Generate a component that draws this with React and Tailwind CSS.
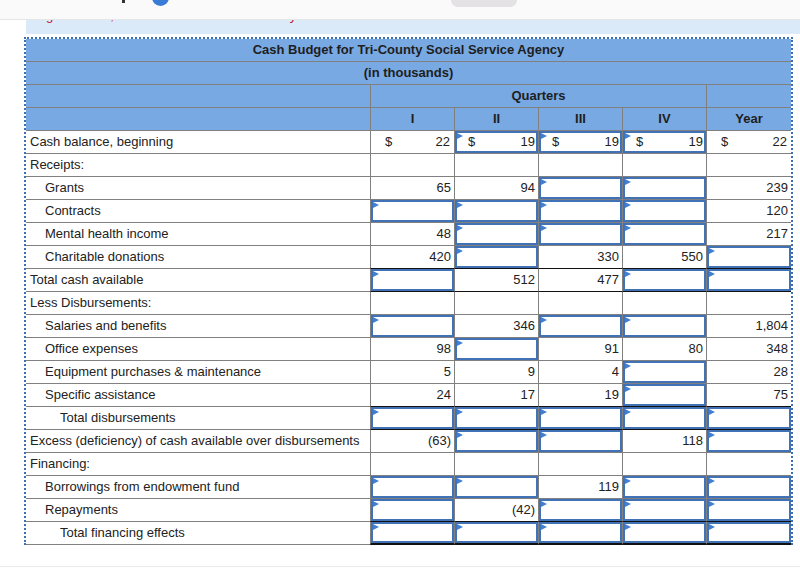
const I = { in: true };

const rows = [
    { l: "Cash balance, beginning", i: 0, c: [{ d: true, v: "22" }, { in: true, d: true, v: "19" }, { in: true, d: true, v: "19" }, { in: true, d: true, v: "19" }, { d: true, v: "22" }] },
    { l: "Receipts:", i: 0, c: [null, null, null, null, null] },
    { l: "Grants", i: 1, c: ["65", "94", I, I, "239"] },
    { l: "Contracts", i: 1, c: [I, I, I, I, "120"] },
    { l: "Mental health income", i: 1, c: ["48", I, I, I, "217"] },
    { l: "Charitable donations", i: 1, c: ["420", I, "330", "550", I] },
    { l: "Total cash available", i: 0, t: true, c: [I, "512", "477", I, I] },
    { l: "Less Disbursements:", i: 0, c: [null, null, null, null, null] },
    { l: "Salaries and benefits", i: 1, c: [I, "346", I, I, "1,804"] },
    { l: "Office expenses", i: 1, c: ["98", I, "91", "80", "348"] },
    { l: "Equipment purchases & maintenance", i: 1, c: ["5", "9", "4", I, "28"] },
    { l: "Specific assistance", i: 1, c: ["24", "17", "19", I, "75"] },
    { l: "Total disbursements", i: 2, t: true, c: [I, I, I, I, I] },
    { l: "Excess (deficiency) of cash available over disbursements", i: 0, c: ["(63)", I, I, "118", I] },
    { l: "Financing:", i: 0, c: [null, null, null, null, null] },
    { l: "Borrowings from endowment fund", i: 1, c: [I, I, "119", I, I] },
    { l: "Repayments", i: 1, c: [I, "(42)", I, I, I] },
    { l: "Total financing effects", i: 2, t: true, last: true, c: [I, I, I, I, I] },
];

const indent = { 0: "pl-[4px]", 1: "pl-[19px]", 2: "pl-[34px]" };
const cols = "grid grid-cols-[344px_84px_84px_84px_84px_85px]";

function Flag() {
    return <span className="absolute top-0 left-0 w-[6px] h-[6px] bg-[#3f7fd4] [clip-path:polygon(0_0,100%_50%,0_100%)]" />;
}

function Cell({ cell, bottom }) {
    const base = `h-[23px] border-l border-[#808080] ${bottom}`;
    if (!cell) return <div className={base} />;
    if (typeof cell === "string") {
        return <div className={`${base} flex items-center justify-end pr-[3px]`}>{cell}</div>;
    }
    if (cell.in) {
        return (
            <div className={base}>
                <div className="relative h-full border-2 border-[#4172b6] flex items-center justify-between pl-[11px] pr-[1px]">
                    <Flag />
                    <span>{cell.d ? "$" : ""}</span>
                    <span>{cell.v || ""}</span>
                </div>
            </div>
        );
    }
    return (
        <div className={`${base} flex items-center justify-between pl-[14px] pr-[4px]`}>
            <span>{cell.d ? "$" : ""}</span>
            <span>{cell.v}</span>
        </div>
    );
}

export default function App() {
    return (
        <div className="w-[800px] h-[572px] bg-white overflow-hidden font-['Liberation_Sans',Arial,sans-serif] text-[13px] text-[#222]">
            {/* sticky top bar, page scrolled under it */}
            <div className="h-[20px] bg-[#fafafa] border-b border-[#e6e6e6] flex items-start">
                <span className="ml-[122px] w-[3px] h-[3px] bg-[#333]" />
                <span className="ml-[27px] -mt-[11px] w-[17px] h-[17px] rounded-full bg-[#3a7bd5]" />
                <span className="ml-[282px] w-[66px] h-[7px] rounded-b-[9px] bg-[#e4e2e5]" />
            </div>
            <div className="ml-[26px] h-[14px] bg-[#dbeaf9] overflow-hidden">
                <div className="flex -mt-[12px] leading-[15px] text-[#c8102e]">
                    <span className="ml-[20px]">g</span>
                    <span className="ml-[57px]">,</span>
                    <span className="ml-[176px]">y</span>
                </div>
            </div>

            <div className="mt-[3px] ml-[24px] w-[769px] border-t-2 border-l-2 border-r-2 border-dotted border-[#3d6fb5]">
                <div className="bg-[#78a9e3] font-bold text-[#1e1e1e]">
                    <div className="h-[23px] border-b border-[#808080] flex items-center justify-center">
                        Cash Budget for Tri-County Social Service Agency
                    </div>
                    <div className="h-[23px] border-b border-[#808080] flex items-center justify-center">
                        (in thousands)
                    </div>
                    <div className="grid grid-cols-[344px_336px_85px]">
                        <div className="h-[23px] border-b border-[#808080]" />
                        <div className="h-[23px] border-b border-l border-[#808080] flex items-center justify-center">Quarters</div>
                        <div className="h-[23px] border-b border-l border-[#808080]" />
                    </div>
                    <div className={cols}>
                        <div className="h-[23px] border-b border-[#808080]" />
                        {["I", "II", "III", "IV", "Year"].map((h) => (
                            <div key={h} className="h-[23px] border-b border-l border-[#808080] flex items-center justify-center">
                                {h}
                            </div>
                        ))}
                    </div>
                </div>

                {rows.map((row, r) => {
                    const next = rows[r + 1];
                    let bottom = "border-b border-b-[#808080]";
                    if (row.last) bottom = "border-b-2 border-b-[#111]";
                    else if (row.t || (next && next.t)) bottom = "border-b border-b-[#111]";
                    return (
                        <div key={row.l} className={cols}>
                            <div className={`h-[23px] border-b border-[#808080] flex items-center whitespace-nowrap ${indent[row.i]}`}>
                                {row.l}
                            </div>
                            {row.c.map((cell, k) => (
                                <Cell key={k} cell={cell} bottom={bottom} />
                            ))}
                        </div>
                    );
                })}
            </div>

            <div className="mt-[21px] border-t border-[#ececec]" />
        </div>
    );
}
